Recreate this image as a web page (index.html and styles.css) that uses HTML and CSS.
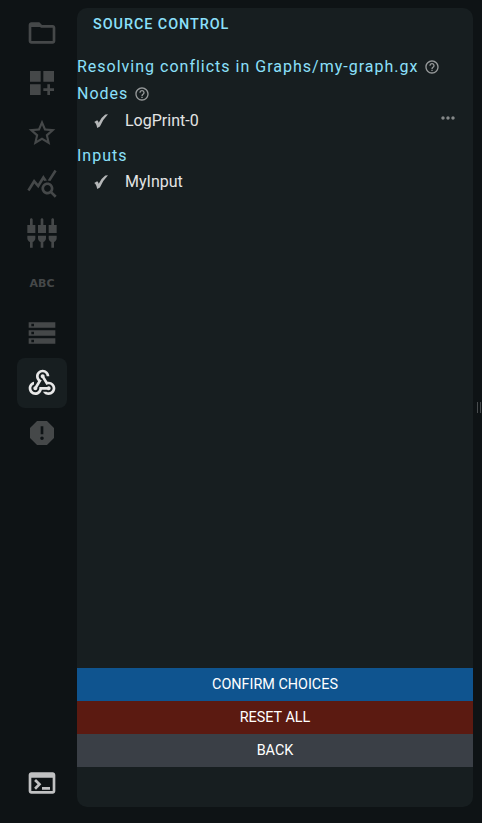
FILE: index.html
```html
<!DOCTYPE html>
<html lang="en">
<head>
<meta charset="utf-8">
<title>Source Control</title>
<link rel="stylesheet" href="styles.css">
</head>
<body>
<div class="app">
  <nav class="rail">
    <button class="tab"><svg class="icon" viewBox="0 0 24 24"><path d="M9.17 6l2 2H20v10H4V6h5.17M10 4H4c-1.1 0-1.99.9-1.99 2L2 18c0 1.1.9 2 2 2h16c1.1 0 2-.9 2-2V8c0-1.1-.9-2-2-2h-8l-2-2z"/><path d="M3 5h7l2.500 2.500H3z"/></svg></button>
    <button class="tab"><svg class="icon" viewBox="0 0 24 24"><path d="M3 3h8v8H3zm10 0h8v8h-8zM3 13h8v8H3zm15 0h-2v3h-3v2h3v3h2v-3h3v-2h-3z"/></svg></button>
    <button class="tab"><svg class="icon" viewBox="0 0 24 24"><path d="M22 9.24l-7.19-.62L12 2 9.19 8.63 2 9.24l5.46 4.73L5.82 21 12 17.27 18.18 21l-1.63-7.03L22 9.24zM12 15.4l-3.76 2.27 1-4.28-3.32-2.88 4.38-.38L12 6.1l1.71 4.04 4.38.38-3.32 2.88 1 4.28L12 15.4z"/></svg></button>
    <button class="tab"><svg class="icon" viewBox="0 0 24 24"><path d="M19.88 18.47c.44-.7.7-1.51.7-2.39 0-2.49-2.01-4.5-4.5-4.5s-4.5 2.01-4.5 4.5 2.01 4.5 4.49 4.5c.88 0 1.7-.26 2.39-.7L21.58 23 23 21.58l-3.12-3.11zm-3.8.11c-1.38 0-2.5-1.12-2.5-2.5s1.12-2.5 2.5-2.5 2.5 1.12 2.5 2.5-1.12 2.5-2.5 2.5zm-.36-8.5c-.74.02-1.45.18-2.1.45l-.55-.83-3.8 6.18-3.01-3.52-3.63 5.81L1 17l5-8 3 3.5L13 6l2.72 4.08zm2.59.5c-.64-.28-1.33-.45-2.05-.49L21.38 2 23 3.18l-4.69 7.4z"/></svg></button>
    <button class="tab"><svg class="icon" viewBox="0 0 24 24"><path d="M5 2c0-.55-.45-1-1-1s-1 .45-1 1v4H1v6h6V6H5V2zm4 14c0 1.3.84 2.4 2 2.82V23h2v-4.18c1.16-.41 2-1.51 2-2.82v-2H9v2zm-8 0c0 1.3.84 2.4 2 2.82V23h2v-4.18C6.16 18.4 7 17.3 7 16v-2H1v2zM21 6V2c0-.55-.45-1-1-1s-1 .45-1 1v4h-2v6h6V6h-2zm-8-4c0-.55-.45-1-1-1s-1 .45-1 1v4H9v6h6V6h-2V2zm4 14c0 1.3.84 2.4 2 2.82V23h2v-4.18c1.16-.41 2-1.51 2-2.82v-2h-6v2z"/></svg></button>
    <button class="tab"><span class="abc">ABC</span></button>
    <button class="tab"><svg class="icon" viewBox="0 0 24 24"><path d="M2 20h20v-4H2v4zm2-3h2v2H4v-2zM2 4v4h20V4H2zm4 3H4V5h2v2zm-4 7h20v-4H2v4zm2-3h2v2H4v-2z"/></svg></button>
    <button class="tab tab-active"><svg class="icon" viewBox="0 0 24 24"><path d="M10 15h5.88c.27-.31.67-.5 1.12-.5.83 0 1.5.67 1.5 1.5s-.67 1.5-1.5 1.5c-.44 0-.84-.19-1.12-.5H11.9c-.46 2.28-2.48 4-4.9 4-2.76 0-5-2.24-5-5 0-2.42 1.72-4.44 4-4.9v2.07c-1.16.41-2 1.53-2 2.83 0 1.65 1.35 3 3 3s3-1.35 3-3v-1zm2.5-11c1.65 0 3 1.35 3 3h2c0-2.76-2.24-5-5-5s-5 2.24-5 5c0 1.43.6 2.71 1.55 3.62l-2.35 3.9c-.68.14-1.2.75-1.2 1.48 0 .83.67 1.5 1.5 1.5s1.5-.67 1.5-1.5c0-.16-.02-.31-.07-.45l3.38-5.63C10.49 9.61 9.5 8.42 9.5 7c0-1.65 1.35-3 3-3zm4.5 9c-.64 0-1.23.2-1.72.54l-3.05-5.07C11.53 8.35 11 7.74 11 7c0-.83.67-1.5 1.5-1.5S14 6.17 14 7c0 .15-.02.29-.06.43l2.19 3.65c.28-.05.57-.08.87-.08 2.76 0 5 2.24 5 5s-2.24 5-5 5c-1.85 0-3.47-1.01-4.33-2.5h2.67c.48.32 1.05.5 1.66.5 1.65 0 3-1.35 3-3s-1.35-3-3-3z"/></svg></button>
    <button class="tab"><svg class="icon" viewBox="0 0 24 24"><path d="M15.73 3H8.27L3 8.27v7.46L8.27 21h7.46L21 15.73V8.27L15.73 3zM12 17.3c-.72 0-1.3-.58-1.3-1.3 0-.72.58-1.3 1.3-1.3.72 0 1.3.58 1.3 1.3 0 .72-.58 1.3-1.3 1.3zm1-4.3h-2V7h2v6z"/></svg></button>
    <button class="tab tab-terminal"><svg class="icon" viewBox="0 0 24 24"><path d="M20 4H4c-1.11 0-2 .9-2 2v12c0 1.1.89 2 2 2h16c1.1 0 2-.9 2-2V6c0-1.1-.89-2-2-2zm0 14H4V8h16v10zm-2-1h-6v-2h6v2zM7.5 17l-1.41-1.41L8.67 13l-2.59-2.59L7.5 9l4 4-4 4z"/></svg></button>
  </nav>
  <main class="panel">
    <h1 class="title">SOURCE CONTROL</h1>
    <h2 class="heading">Resolving conflicts in Graphs/my-graph.gx
      <svg class="help" viewBox="0 0 24 24"><path d="M11 18h2v-2h-2v2zm1-16C6.48 2 2 6.48 2 12s4.480 10 10 10 10-4.480 10-10S17.520 2 12 2zm0 18c-4.410 0-8-3.590-8-8s3.590-8 8-8 8 3.590 8 8-3.590 8-8 8zm0-14c-2.210 0-4 1.790-4 4h2c0-1.100.9-2 2-2s2 .9 2 2c0 2-3 1.750-3 5h2c0-2.250 3-2.500 3-5 0-2.210-1.790-4-4-4z"/></svg>
    </h2>
    <h2 class="heading">Nodes
      <svg class="help" viewBox="0 0 24 24"><path d="M11 18h2v-2h-2v2zm1-16C6.48 2 2 6.48 2 12s4.480 10 10 10 10-4.480 10-10S17.520 2 12 2zm0 18c-4.410 0-8-3.590-8-8s3.590-8 8-8 8 3.590 8 8-3.590 8-8 8zm0-14c-2.210 0-4 1.790-4 4h2c0-1.100.9-2 2-2s2 .9 2 2c0 2-3 1.750-3 5h2c0-2.250 3-2.500 3-5 0-2.210-1.790-4-4-4z"/></svg>
    </h2>
    <div class="item item-node">
      <svg class="check" viewBox="0 0 14 14"><path d="M.2 8 3.200 6.300Q4.300 7.100 4.700 8.800Q7.500 3.200 11.300.6L14 .3Q8.600 5.700 5.900 12.600L3.200 13.900Q2.300 9.300.2 8z"/></svg>
      <span class="name">LogPrint-0</span>
      <svg class="more" viewBox="0 0 24 24"><path d="M6 10c-1.100 0-2 .9-2 2s.9 2 2 2 2-.9 2-2-.9-2-2-2zm12 0c-1.100 0-2 .9-2 2s.9 2 2 2 2-.9 2-2-.9-2-2-2zm-6 0c-1.100 0-2 .9-2 2s.9 2 2 2 2-.9 2-2-.9-2-2-2z"/></svg>
    </div>
    <h2 class="heading">Inputs</h2>
    <div class="item item-input">
      <svg class="check" viewBox="0 0 14 14"><path d="M.2 8 3.200 6.300Q4.300 7.100 4.700 8.800Q7.500 3.200 11.300.6L14 .3Q8.600 5.700 5.900 12.600L3.200 13.900Q2.300 9.300.2 8z"/></svg>
      <span class="name">MyInput</span>
    </div>
    <div class="actions">
      <button class="action confirm">CONFIRM CHOICES</button>
      <button class="action reset">RESET ALL</button>
      <button class="action back">BACK</button>
    </div>
  </main>
  <div class="gutter"><span class="grip"></span></div>
</div>
</body>
</html>
```
FILE: styles.css
```css
* { box-sizing: border-box; }
body {
  margin: 0;
  background: #0e1315;
  font-family: Roboto, "Liberation Sans", sans-serif;
}
button {
  border: 0;
  padding: 0;
  font: inherit;
}
svg { fill: currentColor; flex: none; }
.app {
  display: flex;
  height: 823px;
  overflow: hidden;
}
.rail {
  display: flex;
  flex-direction: column;
  width: 77px;
  padding: 8px 10px 15px 17px;
}
.tab {
  display: flex;
  align-items: center;
  justify-content: center;
  width: 50px;
  height: 50px;
  border-radius: 8px;
  background: none;
  color: #454849;
}
.icon { width: 32px; height: 32px; }
.abc {
  font: 700 11px/1 "DejaVu Sans", sans-serif;
}
.tab-active { background: #171e20; color: #e8e8e8; }
.tab-terminal { margin-top: auto; color: #c0c1c2; }
.panel {
  display: flex;
  flex-direction: column;
  width: 396px;
  height: 799px;
  margin-top: 8px;
  padding-bottom: 40px;
  border-radius: 10px;
  background: #171e20;
}
.title {
  margin: 0 0 11px;
  padding-left: 16px;
  height: 34px;
  font-size: 14.4px;
  line-height: 34px;
  font-weight: 500;
  letter-spacing: 0.95px;
  color: #8be0fb;
}
.heading {
  display: flex;
  align-items: center;
  gap: 6px;
  margin: 0;
  height: 27px;
  font-size: 16px;
  font-weight: 400;
  letter-spacing: 1px;
  white-space: nowrap;
  color: #8be0fb;
}
.help { width: 16px; height: 16px; color: #96999a; }
.item {
  display: flex;
  align-items: center;
  height: 26px;
  padding: 0 15px 0 17px;
  color: #e3e4e4;
  font-size: 16px;
}
.item-node { margin-bottom: 9px; }
.item-input { height: 24px; }
.check { width: 14px; height: 14px; margin-top: 1px; color: #b5b7b8; }
.name { margin-left: 17px; }
.more { width: 20px; height: 20px; margin: -4px 0 0 auto; color: #858889; }
.actions {
  display: flex;
  flex-direction: column;
  margin-top: auto;
}
.action {
  height: 33px;
  color: #fff;
  font-size: 14.4px;
}
.confirm { background: #0f548f; }
.reset { background: #5b1a11; }
.back { background: #3a3f46; }
.gutter {
  display: flex;
  align-items: center;
  justify-content: flex-end;
  flex: 1;
  padding: 0 1px 8px 0;
}
.grip {
  width: 4px;
  height: 11px;
  border: solid #484c4e;
  border-width: 0 1px;
}
```
